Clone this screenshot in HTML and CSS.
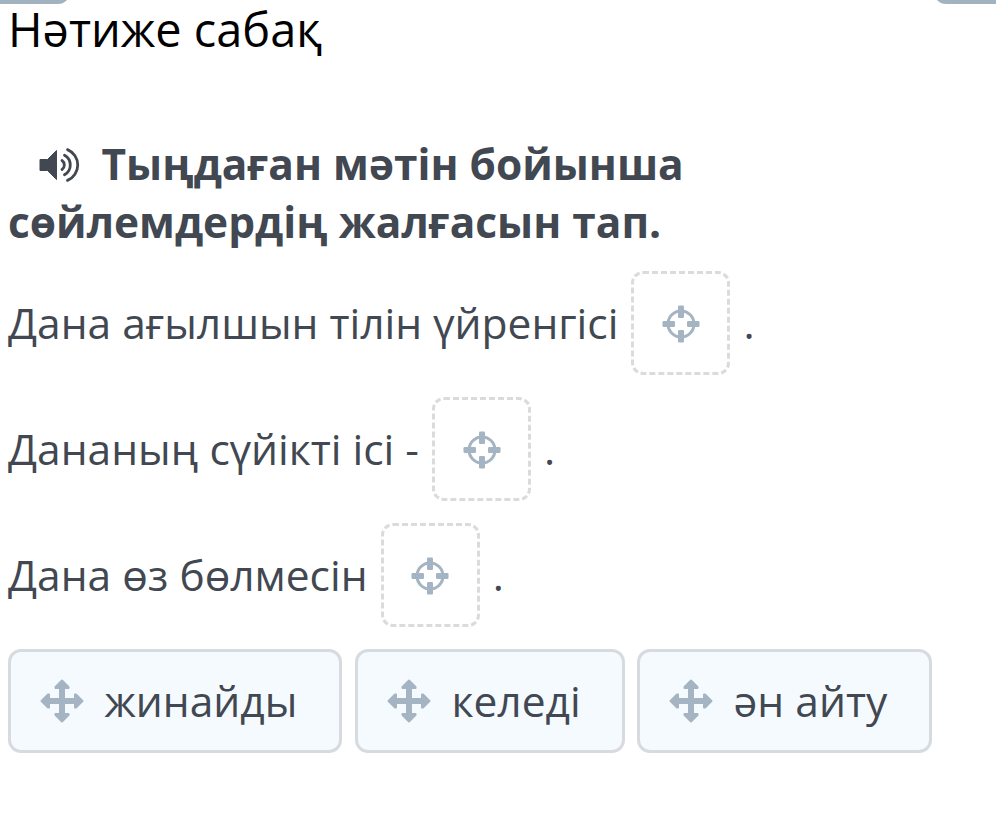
FILE: index.html
```html
<!DOCTYPE html>
<html lang="kk">
<head>
  <meta charset="UTF-8">
  <meta name="viewport" content="width=device-width, initial-scale=1.0">
  <title>Нәтиже сабақ</title>
  <link rel="stylesheet" href="styles.css">
</head>
<body>
  <!-- shared icons -->
  <svg class="sprite" width="0" height="0">
    <symbol id="target" viewBox="0 0 38 38">
      <circle cx="19" cy="19" r="13" fill="none" stroke="currentColor" stroke-width="3"/>
      <g fill="currentColor">
        <rect x="16" y="0.5" width="6" height="12.5" rx="1.2"/>
        <rect x="16" y="25" width="6" height="12.5" rx="1.2"/>
        <rect x="0.5" y="16" width="12.5" height="6" rx="1.2"/>
        <rect x="25" y="16" width="12.5" height="6" rx="1.2"/>
      </g>
    </symbol>
    <symbol id="move" viewBox="0 0 44 44">
      <path fill="currentColor" stroke="currentColor" stroke-width="2" stroke-linejoin="round" d="M22 1.5 L28.5 8 V9 H24 V20 H35 V15.5 H36 L42.5 22 L36 28.5 H35 V24 H24 V35 H28.5 V36 L22 42.5 L15.5 36 V35 H20 V24 H9 V28.5 H8 L1.5 22 L8 15.5 H9 V20 H20 V9 H15.5 V8 Z"/>
    </symbol>
  </svg>

  <div class="tabs">
    <div class="tab tab-left"></div>
    <div class="tab tab-right"></div>
  </div>

  <h1>Нәтиже сабақ</h1>

  <h2 class="question">
    <svg class="sound" viewBox="0 0 42 36">
      <path fill="currentColor" stroke="currentColor" stroke-width="1" stroke-linejoin="round" d="M2 12.5 H9.5 L18.5 3.5 V32.5 L9.5 23.5 H2 Z"/>
      <g fill="none" stroke="currentColor" stroke-width="2.8" stroke-linecap="round">
        <path d="M24 13.5 A5.5 5.5 0 0 1 24 22.5"/>
        <path d="M26.5 8.2 A11.2 11.2 0 0 1 26.5 27.8"/>
        <path d="M29.5 2.6 A16.7 16.7 0 0 1 29.5 33.4"/>
      </g>
    </svg>Тыңдаған мәтін бойынша сөйлемдердің жалғасын тап.
  </h2>

  <div class="sentences">
    <p>Дана ағылшын тілін үйренгісі <span class="drop"><svg><use href="#target"/></svg></span> .</p>
    <p>Дананың сүйікті ісі - <span class="drop"><svg><use href="#target"/></svg></span> .</p>
    <p>Дана өз бөлмесін <span class="drop"><svg><use href="#target"/></svg></span> .</p>
  </div>

  <div class="answers">
    <div class="answer answer-1"><svg><use href="#move"/></svg>жинайды</div>
    <div class="answer answer-2"><svg><use href="#move"/></svg>келеді</div>
    <div class="answer answer-3"><svg><use href="#move"/></svg>ән айту</div>
  </div>
</body>
</html>
```
FILE: styles.css
```css
* {
  box-sizing: border-box;
}
body {
  margin: 0;
  color: #414851;
  background-color: #fff;
  font-family: "Open Sans", "Noto Sans", sans-serif;
  font-size: 42.5px;
}
.sprite {
  display: block;
}
.tabs {
  display: flex;
  justify-content: space-between;
  height: 4px;
  overflow: hidden;
}
.tab {
  height: 20px;
  margin-top: -16px;
  background-color: #a2b2c1;
}
.tab-left {
  width: 70px;
  border-bottom-right-radius: 12px;
}
.tab-right {
  width: 62px;
  border-bottom-left-radius: 12px;
}
h1 {
  margin: 0 8px;
  height: 131px;
  color: #000;
  font-size: 46.9px;
  font-weight: 400;
  line-height: 50px;
}
.question {
  margin: 0 8px;
  height: 125px;
  font-size: 42.45px;
  font-weight: 700;
  line-height: 57.5px;
}
.sound {
  width: 42px;
  height: 36px;
  margin: 0 21.5px 0 30px;
  vertical-align: -3px;
}
.sentences {
  padding: 0 8px;
}
.sentences p {
  display: flex;
  align-items: center;
  height: 126px;
  margin: 0;
  padding-bottom: 2px;
  white-space: pre;
}
.drop {
  display: flex;
  align-items: center;
  justify-content: center;
  width: 99px;
  height: 104px;
  margin: 2px 2px 0;
  border: 3px dashed #d9dbdd;
  border-radius: 12px;
}
.drop svg {
  width: 38px;
  height: 38px;
  margin-top: 2px;
  color: #a4b4c2;
}
.answers {
  display: flex;
  gap: 13px;
  margin: 11px 8px 0;
}
.answer {
  display: flex;
  align-items: center;
  height: 104px;
  padding: 0 0 2px 29px;
  border: 3px solid #d7dbdf;
  border-radius: 13px;
  background-color: #f5fafe;
  white-space: nowrap;
}
.answer svg {
  width: 44px;
  height: 44px;
  margin: 2px 20.5px 0 0;
  color: #a4b4c2;
}
.answer-1 {
  width: 334px;
}
.answer-2 {
  width: 270px;
}
.answer-3 {
  width: 295px;
  margin-left: -1px;
}
```
